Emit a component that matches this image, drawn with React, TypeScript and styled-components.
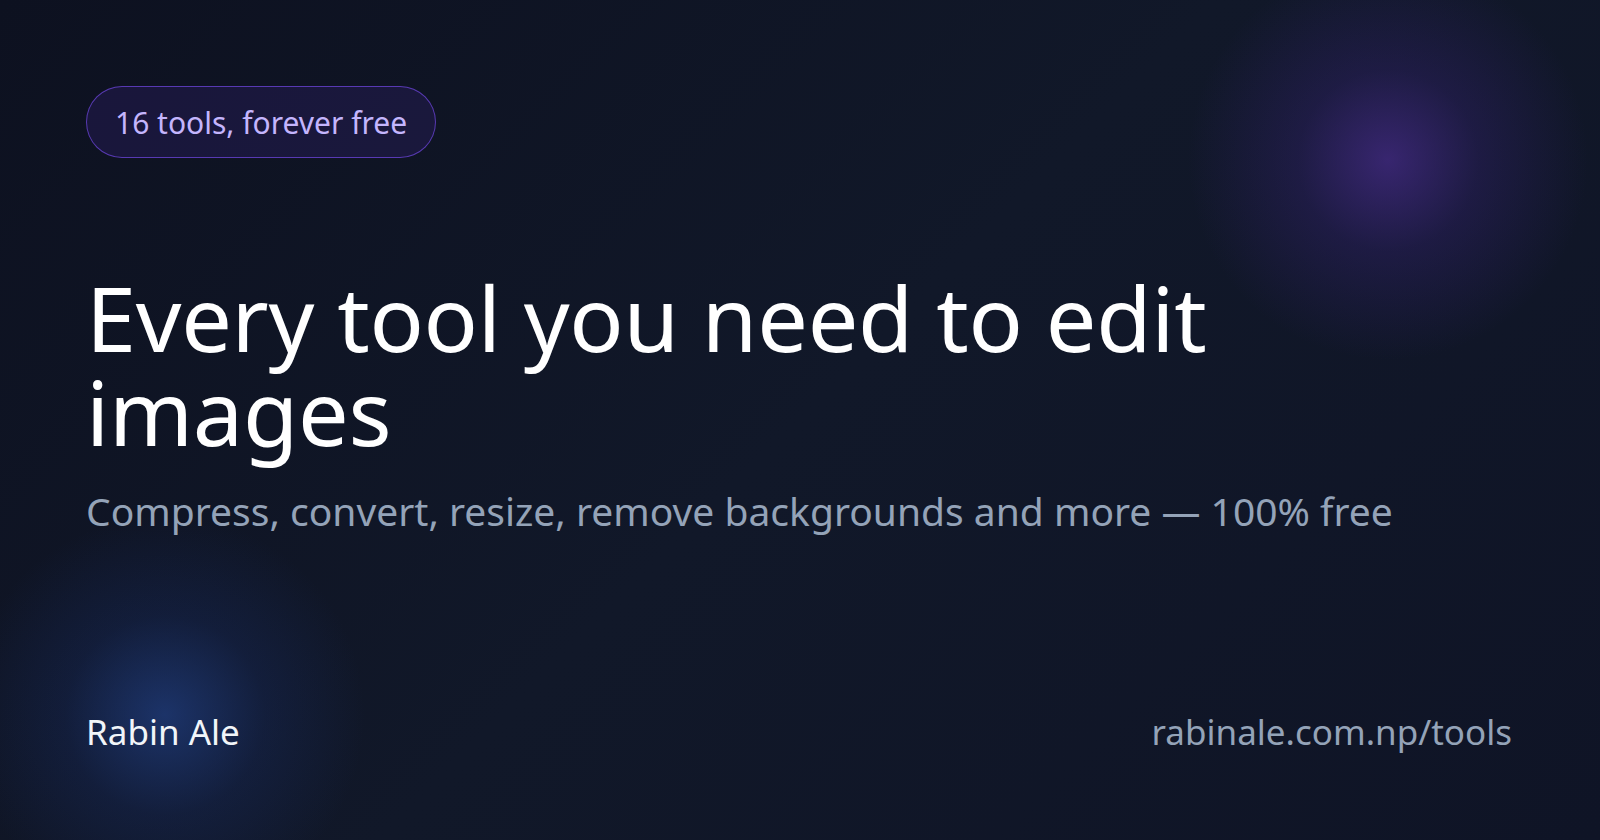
import React from "react";
import styled, { createGlobalStyle } from "styled-components";

const Global = createGlobalStyle`
  html, body { margin: 0; padding: 0; }
  body { background: #0f1426; }
`;

const Page = styled.div`
  width: 1600px;
  height: 840px;
  box-sizing: border-box;
  padding: 86px 88px 84px 86px;
  display: flex;
  flex-direction: column;
  font-family: "Noto Sans", "Open Sans", sans-serif;
  background:
    radial-gradient(circle at 1388px 160px, rgba(88, 50, 170, 0.55) 0px, rgba(70, 40, 150, 0.25) 90px, rgba(40, 30, 100, 0) 200px),
    radial-gradient(circle at 165px 715px, rgba(40, 80, 170, 0.5) 0px, rgba(30, 60, 140, 0.2) 100px, rgba(20, 40, 100, 0) 200px),
    linear-gradient(135deg, #0d1120 0%, #111829 50%, #0f1426 100%);
  overflow: hidden;
`;

const Pill = styled.div`
  align-self: flex-start;
  height: 72px;
  box-sizing: border-box;
  padding: 0 28px;
  display: flex;
  align-items: center;
  border-radius: 36px;
  border: 1.5px solid rgba(110, 70, 220, 0.75);
  background: rgba(40, 28, 90, 0.45);
  color: #c4b5fd;
  font-size: 30px;
`;

const Title = styled.h1`
  margin: 112px 0 0;
  font-weight: 400;
  font-size: 90px;
  line-height: 94px;
  color: #ffffff;
  max-width: 1230px;
  letter-spacing: -0.3px;
`;

const Subtitle = styled.p`
  margin: 25px 0 0;
  font-size: 39px;
  line-height: 55px;
  color: #94a3b8;
  max-width: 1380px;
`;

const Footer = styled.div`
  margin-top: auto;
  display: flex;
  justify-content: space-between;
  align-items: center;
  font-size: 35px;
  line-height: 48px;
`;

const Name = styled.span`
  color: #f1f5f9;
`;

const Url = styled.span`
  color: #94a3b8;
`;

export default function App() {
  return (
    <>
      <Global />
      <Page>
        <Pill>16 tools, forever free</Pill>
        <Title>Every tool you need to edit images</Title>
        <Subtitle>Compress, convert, resize, remove backgrounds and more — 100% free</Subtitle>
        <Footer>
          <Name>Rabin Ale</Name>
          <Url>rabinale.com.np/tools</Url>
        </Footer>
      </Page>
    </>
  );
}
